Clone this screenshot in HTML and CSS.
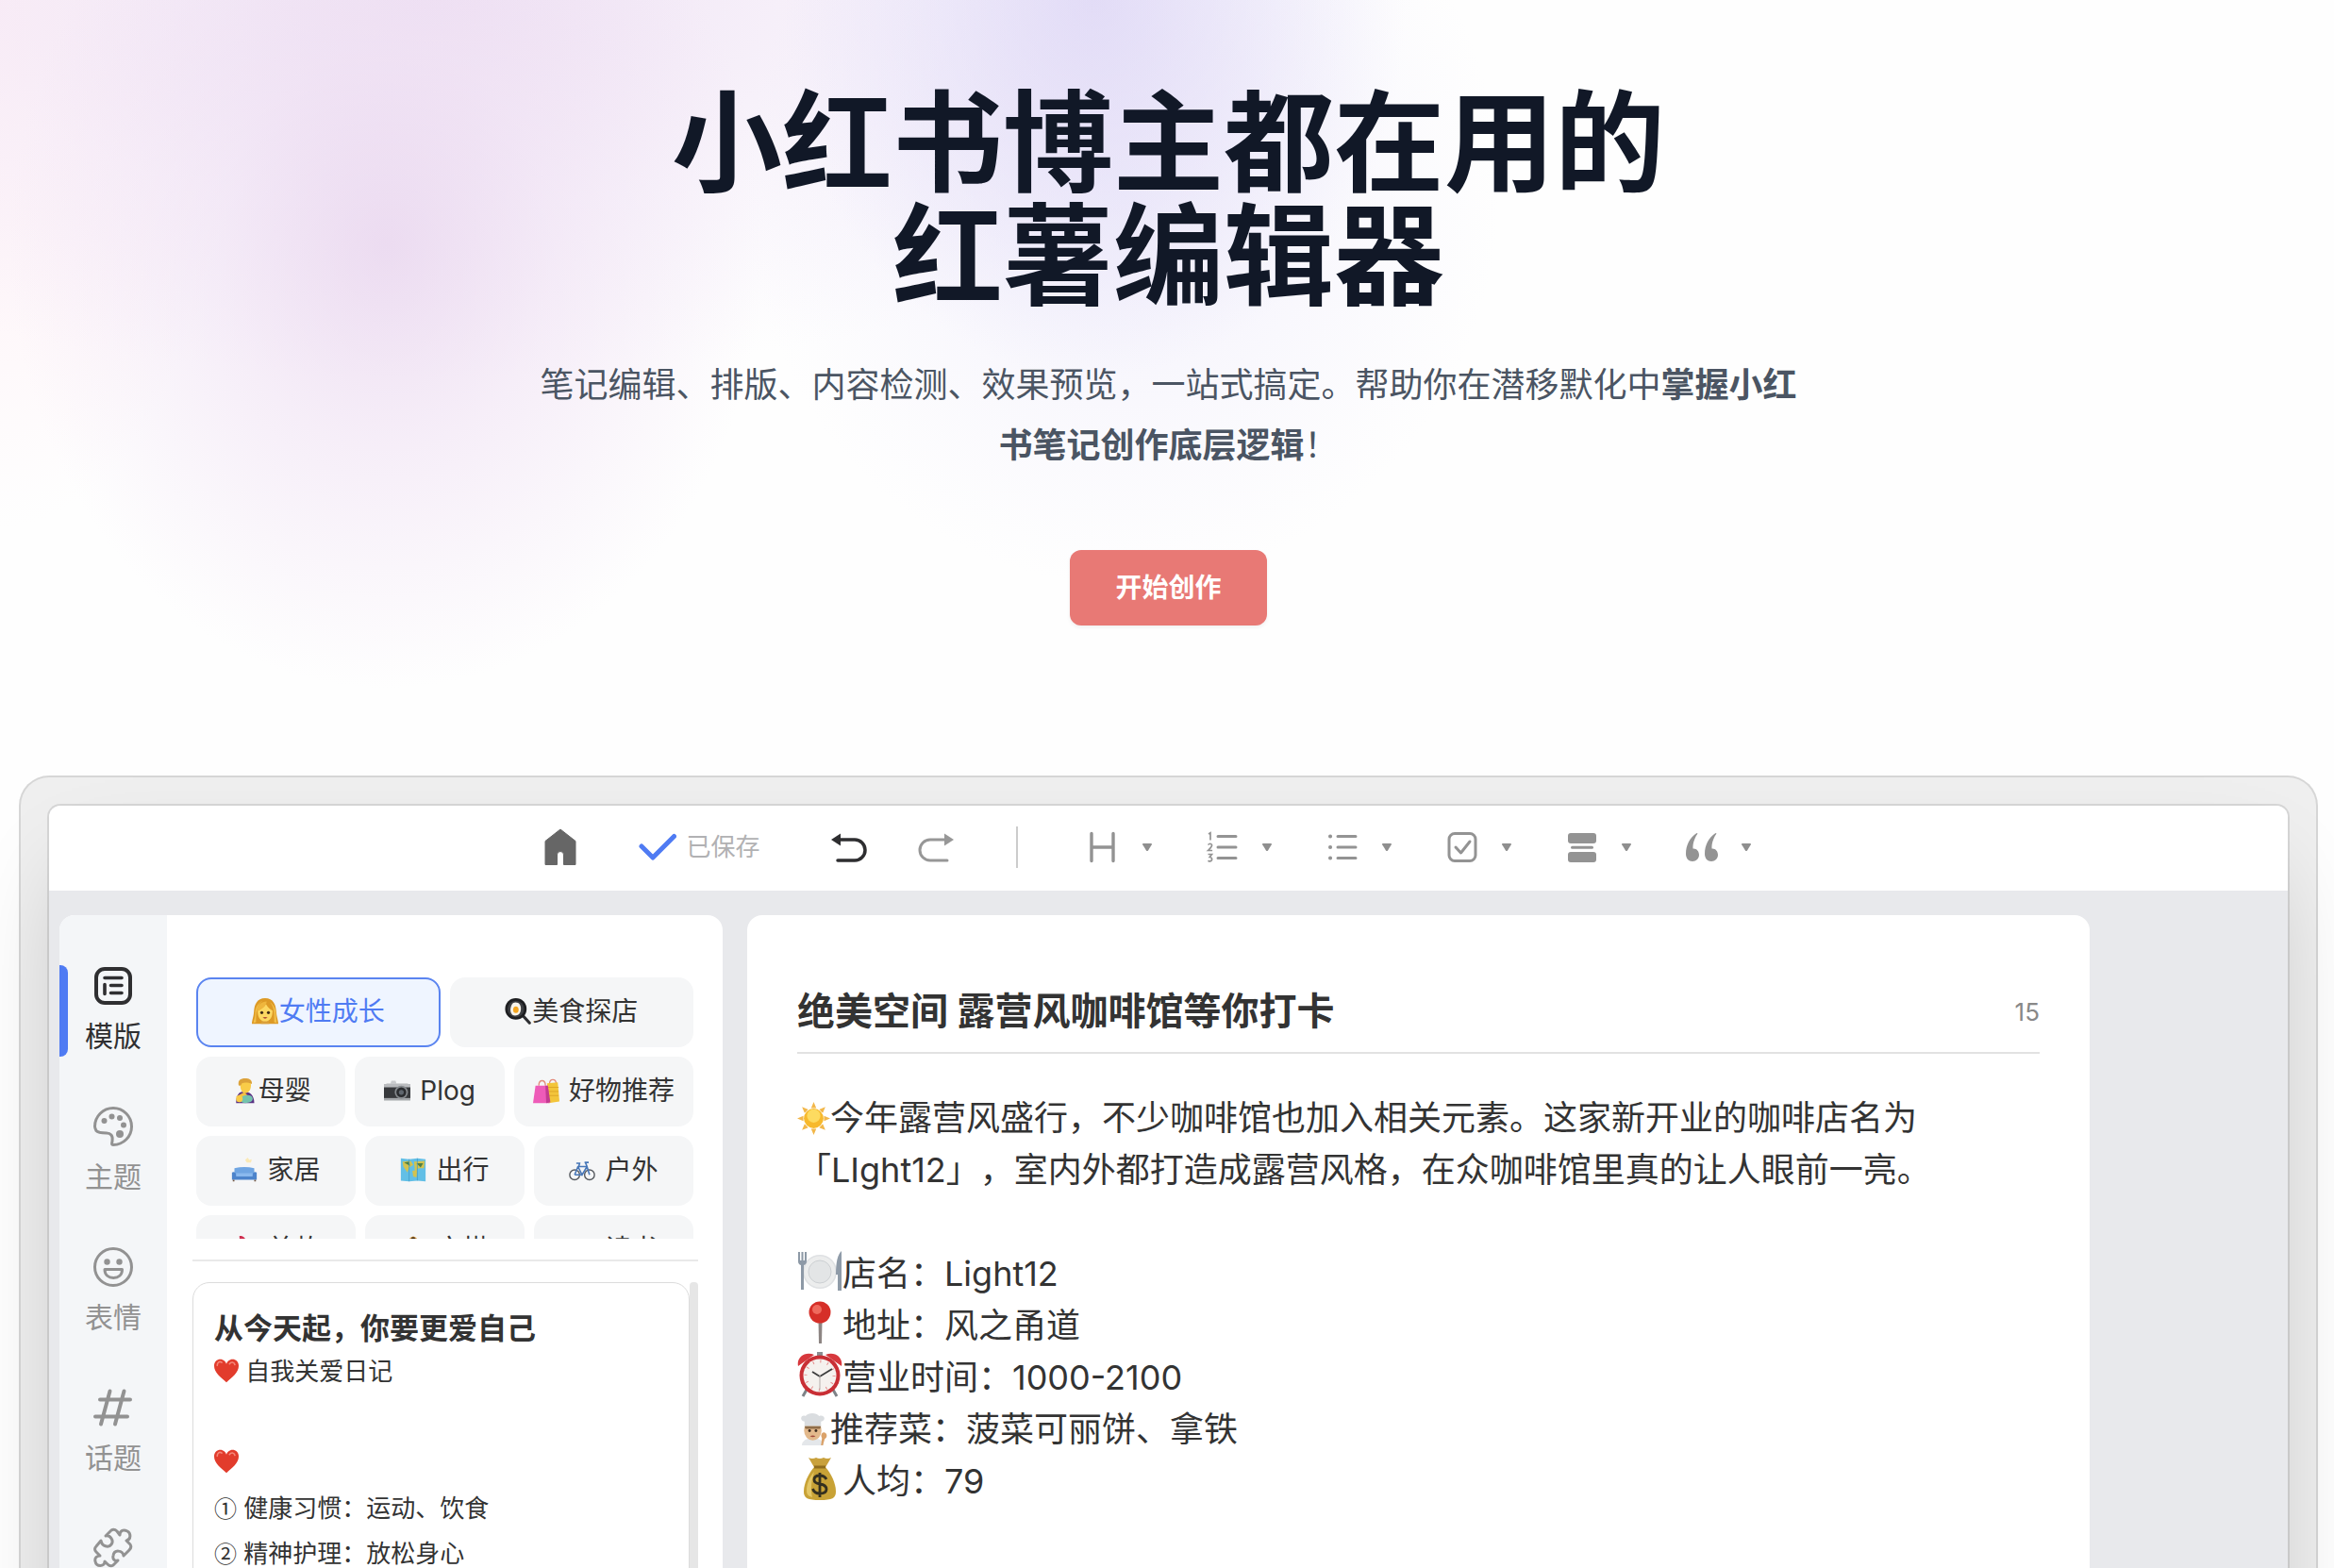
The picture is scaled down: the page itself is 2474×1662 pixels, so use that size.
FILE: index.html
```
<!DOCTYPE html>
<html lang="zh-Hans">
<head>
  <meta charset="UTF-8">
  <meta name="viewport" content="width=device-width, initial-scale=1.0">
  <title>红薯编辑器</title>
  <link rel="stylesheet" href="styles.css">
</head>
<body>
  <!-- 图标 -->
  <svg class="sprite" aria-hidden="true">
    <symbol id="e-woman" viewBox="0 0 32 32">
      <path d="M16 0C6 0 3 8 2.500 16 2 23 0 27 0 31h32c0-4-2-8-2.500-15C29 8 26 0 16 0z" fill="#dd9a26"/>
      <path d="M5 29C5 20 5 8 13 3 7 6 4 12 4 18s-2 9-2 12zM27 29c0-9 1-17-5-24 5 3 7 9 7 14s1 8 1 11z" fill="#f2c14c"/>
      <path d="M12 25h8l1 6H11z" fill="#dba03a"/>
      <path d="M7 15c3-1 8-4 10-8 2 4 5 6 8 8 0 8-3 13-9 13S7 23 7 15z" fill="#fdd862"/>
      <path d="M6 16C6 8 12 4 18 4c-1 6-7 10-12 12z" fill="#efb63d"/>
      <circle cx="12" cy="17.500" r="1.800" fill="#3f2a16"/><circle cx="20" cy="17.500" r="1.800" fill="#3f2a16"/>
      <path d="M13 23.500q3-1.500 6 0-3 2.500-6 0z" fill="#a8402f"/>
    </symbol>
    <symbol id="e-pan" viewBox="0 0 32 32">
      <path d="M20 19l10 11" stroke="#2f2f33" stroke-width="3.500" stroke-linecap="round"/>
      <ellipse cx="13.500" cy="13" rx="13" ry="13" fill="#1d1e21"/>
      <ellipse cx="13.500" cy="13" rx="10" ry="10" fill="#3c3e42"/>
      <path d="M13 5c5 0 7 4 6.500 9s-3 7-7 7-6-4-5.500-8S9 5 13 5z" fill="#f7f4ec"/>
      <ellipse cx="13.500" cy="14" rx="3.300" ry="4" fill="#f4a51f"/>
    </symbol>
    <symbol id="e-baby" viewBox="0 0 32 32">
      <path d="M6 31c0-10 4-14 10-14s12 4 12 14z" fill="#5b3285"/>
      <path d="M11 8c0 7 2 11 6 11s7-4 7-9-2-8-7-8-6 2-6 6z" fill="#f9cc48"/>
      <path d="M9 9C8 3 12 1 17 1s9 2 8 7c-4-2-9-2-12-1-1 3-3 4-4 2z" fill="#dca23a"/>
      <path d="M6 23l10-5 4 4-10 6z" fill="#f4c044"/>
      <path d="M12 24c6-4 13-3 14 1s-4 6-9 6-7-3-5-7z" fill="#74c3ad"/>
      <circle cx="10" cy="26" r="4" fill="#f9cc48"/>
    </symbol>
    <symbol id="e-camera" viewBox="0 0 32 32">
      <path d="M3 7h5l1-3h5l1 3h14v4H2z" fill="#c9cbcd"/>
      <rect x="0" y="9" width="32" height="18" rx="2" fill="#37393c"/>
      <rect x="0" y="8" width="32" height="4" fill="#b9bbbe"/>
      <rect x="0" y="25" width="32" height="3" fill="#a4a7aa"/>
      <circle cx="21" cy="18" r="8" fill="#85898d"/><circle cx="21" cy="18" r="6" fill="#2a2c2f"/>
      <circle cx="21" cy="18" r="3" fill="#5f666e"/>
    </symbol>
    <symbol id="e-bags" viewBox="0 0 32 32">
      <path d="M20 8c0-7 8-7 8 0M7 10c0-8 8-8 8 0" fill="none" stroke="#e28a7a" stroke-width="1.500"/>
      <path d="M17 7l13-1 2 23-13 2z" fill="#f3c53a"/>
      <path d="M18 12h13M18 17h13M18 22h13" stroke="#dba225"/>
      <path d="M3 10h15l2 21H0z" fill="#ee5bb8"/>
      <path d="M15 10h3l3 20-5 1z" fill="#c23b90"/>
    </symbol>
    <symbol id="e-sofa" viewBox="0 0 32 32">
      <path d="M20 1l2 3 3-1-1 4-5 0-2-3z" fill="#fbe9b5"/>
      <path d="M4 14q12-3 24 0v10H4z" fill="#6fa5e2"/>
      <path d="M1 19q4-2 5 3h20q1-5 5-3v9H1z" fill="#4d84cb"/>
      <path d="M6 20h20v4H6z" fill="#8ab9ee"/>
      <path d="M3 28v2M29 28v2" stroke="#755843" stroke-width="2"/>
    </symbol>
    <symbol id="e-map" viewBox="0 0 32 32">
      <path d="M1 2l10 1 10-1 10 1v27l-10-1-10 1-10-1z" fill="#62bfe6"/>
      <path d="M3 6l10-1 3 5-5 3-2 6-5-7zM17 6l13-1-1 9-6 0-5 3zM15 17l6-1-1 9-4-1z" fill="#d2c350"/>
      <path d="M5 7l6-1 1 5zM20 8h8l-3 5z" fill="#4d7f45"/>
      <path d="M11 3v27M21 2v27" stroke="#3d97c4" stroke-width=".8"/>
    </symbol>
    <symbol id="e-bike" viewBox="0 0 32 32">
      <circle cx="7" cy="22" r="6" fill="none" stroke="#55595e" stroke-width="1.600"/>
      <circle cx="25" cy="22" r="6" fill="none" stroke="#55595e" stroke-width="1.600"/>
      <path d="M7 22l4-10h11l3 10M11 12l5 10 6-10M7 22h9M9 8h4l-1 4M20 7l2 5M19 7h5" fill="none" stroke="#4777b8" stroke-width="1.800"/>
    </symbol>
    <symbol id="e-lipstick" viewBox="0 0 32 32">
      <path d="M10 0c4-1 8 3 9 8v7h-8z" fill="#cf2f50"/><path d="M9 15h12v6H9z" fill="#e3bf53"/><path d="M8 21h14v10H8z" fill="#333"/>
    </symbol>
    <symbol id="e-bell" viewBox="0 0 32 32">
      <path d="M9 7q7-13 14 0l3 8H6z" fill="#c98d35"/><circle cx="16" cy="4" r="2.500" fill="#463019"/><path d="M6 15h20v16H6z" fill="#a4682d"/>
    </symbol>
    <symbol id="e-book" viewBox="0 0 32 32">
      <path d="M1 6q8-3 15 0 7-3 15 0v20H1z" fill="#d9dde2"/><path d="M16 6v20" stroke="#8b9098"/>
    </symbol>
    <symbol id="e-heart" viewBox="0 0 32 32">
      <path d="M16 31C8 24 0 18 0 9.500 0 4 4 1 8 1c4 0 7 3 8 6 1-3 4-6 8-6s8 3 8 8.500C32 18 24 24 16 31z" fill="#e23c2c"/>
      <path d="M4 9c0-4 3-6 6-4M20 7c2-3 6-3 7 1" fill="none" stroke="#f5887a" stroke-width="2" stroke-linecap="round"/>
    </symbol>
    <symbol id="e-sun" viewBox="0 0 32 32">
      <path d="M16 0l2.500 6h-5zM16 32l2.500-6h-5zM0 16l6-2.500v5zM32 16l-6-2.500v5zM4.700 4.700l6 2.500-3.500 3.500zM27.300 4.700l-6 2.500 3.500 3.500zM4.700 27.300l6-2.500-3.500-3.500zM27.300 27.300l-6-2.500 3.500-3.500z" fill="#f2b74a"/>
      <circle cx="16" cy="16" r="9.500" fill="#f7b92c"/><circle cx="16" cy="13.500" r="6.500" fill="#fddb60"/>
    </symbol>
    <symbol id="e-plate" viewBox="0 0 48 48">
      <circle cx="24" cy="25" r="18" fill="#dfe1e3"/><circle cx="24" cy="25" r="16.500" fill="#eceded"/>
      <circle cx="24" cy="25" r="12" fill="#e3e5e6" stroke="#cdd0d3"/>
      <path d="M1 4v10q0 3 3 4v26h3V18q3-1 3-4V4H8v9H6.500V4h-2v9H3V4z" fill="#8d99a6"/>
      <path d="M47 3q-6 5-6 25h2v17h4z" fill="#8f9ba8"/>
    </symbol>
    <symbol id="e-pin" viewBox="0 0 48 48">
      <path d="M22.500 22h4l-.5 24h-3z" fill="#8d8583"/>
      <circle cx="24" cy="13" r="11.500" fill="#d62f28"/><circle cx="21" cy="10" r="5" fill="#ef6a5d"/>
    </symbol>
    <symbol id="e-clock" viewBox="0 0 48 48">
      <path d="M10 40l-4 7M38 40l4 7" stroke="#7e8388" stroke-width="3"/>
      <rect x="21" y="0" width="6" height="5" fill="#8a8e92"/>
      <path d="M1 15C-1 6 8-1 18 3zM47 15C49 6 40-1 30 3z" fill="#d7383d"/>
      <circle cx="24" cy="25" r="21.500" fill="#c92f35"/><circle cx="24" cy="25" r="17.500" fill="#f5f1ee"/>
      <circle cx="24" cy="25" r="15" fill="none" stroke="#e58c8c" stroke-width="3" stroke-dasharray="1 6.850"/>
      <path d="M16 21l8 5 13-8" fill="none" stroke="#3c3c3c" stroke-width="1.800"/>
      <path d="M24 25v15" stroke="#b5adab"/>
    </symbol>
    <symbol id="e-chef" viewBox="0 0 36 36">
      <path d="M5 35q1-8 12-8t12 8z" fill="#e4e7ea"/>
      <ellipse cx="17" cy="19" rx="9.500" ry="10.500" fill="#e3b98c"/>
      <path d="M8 14h18l-1 3H9z" fill="#8f6d49"/>
      <path d="M8 14V9C2 8 4 1 9 3c3-4 12-4 15 0 6-2 8 5 2 6v5z" fill="#dadde0"/>
      <circle cx="13.500" cy="19" r="1.500" fill="#3c2b1f"/><circle cx="20.500" cy="19" r="1.500" fill="#3c2b1f"/>
      <path d="M14 25q3-1.500 6 0-3 2-6 0z" fill="#a34a3c"/>
      <path d="M30 21c3 1 3 6 0 7l-2 7h-2l1-8c-2-3 0-7 3-6z" fill="#dba26a"/>
    </symbol>
    <symbol id="e-money" viewBox="0 0 48 48">
      <path d="M12 2q4 2 8 0 4 2 8 0 4 2 8 0l-7 12H19z" fill="#c9a13c"/>
      <path d="M18 12h12c6 7 11 17 11 26 0 7-4 9-17 9S7 45 7 38c0-9 5-19 11-26z" fill="#c8a236"/>
      <path d="M18 17c-5 6-8 13-8 20 0 4 2 6 6 7-2-9-1-18 2-27z" fill="#e4c766"/>
      <path d="M18 12h12" stroke="#8f6c1e" stroke-width="3"/>
      <path d="M31 25q-2-4-7-4-6 0-6 4.500 0 3.500 6 4.500 7 1 7 5.500 0 4.500-7 4.500-6 0-7.500-5M24 18v26" fill="none" stroke="#34301f" stroke-width="2.800"/>
    </symbol>
    <symbol id="i-caret" viewBox="0 0 12 12"><path d="M2 2h8q1.500 0 .8 1.200L7 9.500q-1 1.200-2 0L1.200 3.200q-.7-1.200.8-1.200z" fill="currentColor"/></symbol>
  </svg>

  <div class="page">
    <!-- 首屏 -->
    <header class="hero">
      <h1>小红书博主都在用的<br>红薯编辑器</h1>
      <p>笔记编辑、排版、内容检测、效果预览，一站式搞定。帮助你在潜移默化中<strong>掌握小红书笔记创作底层逻辑</strong>！</p>
      <a class="cta" href="#editor">开始创作</a>
    </header>

    <!-- 编辑器 -->
    <main class="frame" id="editor">
      <div class="app">
        <div class="toolbar">
          <button class="tool home" type="button" aria-label="首页">
            <svg viewBox="0 0 36 40"><path d="M18 1L34 13.500V38.500H21.500V28a3.500 3.500 0 0 0-7 0V38.500H2V13.500z" fill="#666" stroke="#666" stroke-linejoin="round"/></svg>
          </button>
          <span class="saved">
            <svg viewBox="0 0 40 40"><path d="M3 19l12 12L37.500 8.500" fill="none" stroke="#4f7bf3" stroke-width="5" stroke-linecap="round" stroke-linejoin="round"/></svg>
            已保存
          </span>
          <button class="tool undo" type="button" aria-label="撤销">
            <svg viewBox="0 0 40 40"><path d="M10 12h16a11 11 0 0 1 0 22H8" fill="none" stroke="#2e2e30" stroke-width="3.500" stroke-linecap="round"/><path d="M1 12l10-6.500v13z" fill="#2e2e30"/></svg>
          </button>
          <button class="tool redo" type="button" aria-label="重做">
            <svg viewBox="0 0 40 40"><path d="M30 12H14a11 11 0 0 0 0 22h18" fill="none" stroke="#979797" stroke-width="3" stroke-linecap="round"/><path d="M39 12L29 5.500v13z" fill="#979797"/></svg>
          </button>
          <span class="divider"></span>
          <div class="formats">
            <button class="tool" type="button" aria-label="标题">
              <svg viewBox="0 0 36 36"><path d="M6 3.500v29M29 3.500v29M6 18h23" fill="none" stroke="#939393" stroke-width="3.400" stroke-linecap="round"/></svg>
              <svg class="caret"><use href="#i-caret"/></svg>
            </button>
            <button class="tool" type="button" aria-label="有序列表">
              <svg viewBox="0 0 36 36"><path d="M13 6.500h19M13 18h19M13 29.500h19" stroke="#939393" stroke-width="3" stroke-linecap="round"/><path d="M3 4l2-1.200v7.600M2.500 15.500q2.500-2.500 4 0 .6 1.500-4 6h4.600M2.500 25.500h4l-2.300 3q3 .3 2.300 3-1.400 2.500-4 .7" fill="none" stroke="#939393" stroke-width="1.700"/></svg>
              <svg class="caret"><use href="#i-caret"/></svg>
            </button>
            <button class="tool" type="button" aria-label="无序列表">
              <svg viewBox="0 0 36 36"><path d="M13 6.500h19M13 18h19M13 29.500h19" stroke="#939393" stroke-width="3" stroke-linecap="round"/><path d="M5 6.500h.1M5 18h.1M5 29.500h.1" stroke="#939393" stroke-width="4" stroke-linecap="round"/></svg>
              <svg class="caret"><use href="#i-caret"/></svg>
            </button>
            <button class="tool" type="button" aria-label="待办">
              <svg viewBox="0 0 36 36"><rect x="4" y="3.500" width="28" height="29" rx="6" fill="none" stroke="#939393" stroke-width="3"/><path d="M11 18l5.500 6L26 12" fill="none" stroke="#939393" stroke-width="3" stroke-linecap="round" stroke-linejoin="round"/></svg>
              <svg class="caret"><use href="#i-caret"/></svg>
            </button>
            <button class="tool" type="button" aria-label="分割">
              <svg viewBox="0 0 36 36" fill="#939393"><rect x="3" y="3" width="30" height="11" rx="3"/><rect x="6" y="16.800" width="24" height="3" rx="1.500"/><rect x="3" y="23" width="30" height="11" rx="3"/></svg>
              <svg class="caret"><use href="#i-caret"/></svg>
            </button>
            <button class="tool" type="button" aria-label="引用">
              <svg viewBox="0 0 36 36" fill="#939393"><path d="M12.500 3C5 8 1 16 1 25c0 5 3 8 7 8s7-3 7-7-3-7-6.500-6.500C8 13 11 7 13.500 3.500z"/><path d="M32.500 3C25 8 21 16 21 25c0 5 3 8 7 8s7-3 7-7-3-7-6.500-6.500C28 13 31 7 33.500 3.500z"/></svg>
              <svg class="caret"><use href="#i-caret"/></svg>
            </button>
          </div>
        </div>

        <div class="workspace">
          <section class="library">
            <nav class="sidebar">
              <a class="side-item active" href="#template">
                <svg viewBox="0 0 44 44" fill="none" stroke="currentColor" stroke-linecap="round"><rect x="4" y="4" width="36" height="36" rx="9" stroke-width="4"/><path d="M13 13.500h18M19.500 21.500H31M19.500 29.500H31M13 20.500v10" stroke-width="3.600"/></svg>
                模版
              </a>
              <a class="side-item" href="#theme">
                <svg viewBox="0 0 44 44"><path d="M22 2.500A19.500 19.500 0 1 1 22 41.500c-2 0-1.500-1-1-4 1-6-2-8.500-6-8.500-5 0-9 0-11-2.500-1-2-1.500-3-1.500-4.500A19.500 19.500 0 0 1 22 2.500z" fill="none" stroke="currentColor" stroke-width="3"/><g fill="currentColor"><circle cx="12.500" cy="16" r="3"/><circle cx="20.500" cy="11.500" r="3"/><circle cx="29" cy="13" r="3"/><circle cx="33" cy="20.500" r="3"/><circle cx="29" cy="30" r="4"/></g></svg>
                主题
              </a>
              <a class="side-item" href="#emoji">
                <svg viewBox="0 0 44 44"><circle cx="22" cy="22" r="19.500" fill="none" stroke="currentColor" stroke-width="3"/><circle cx="15.500" cy="16.500" r="3.200" fill="currentColor"/><circle cx="28.500" cy="16.500" r="3.200" fill="currentColor"/><path d="M13 24.500h18.500c0 6-4 9-9.200 9S13 30.500 13 24.500z" fill="none" stroke="currentColor" stroke-width="3" stroke-linejoin="round"/></svg>
                表情
              </a>
              <a class="side-item" href="#topic">
                <svg viewBox="0 0 44 44" fill="none" stroke="currentColor" stroke-width="4" stroke-linecap="round"><path d="M18.500 4.500L9 39.500M33.500 4.500L24 39.500M8 13.500h32M3 31.500h34"/></svg>
                话题
              </a>
              <a class="side-item" href="#plugin" aria-label="插件">
                <svg viewBox="0 0 44 44" fill="none" stroke="currentColor" stroke-width="3" stroke-linejoin="round"><path d="M14 9l6-6q3-2 6 1l3 4c0-5 4-6 8-4s4 9-1 10l4 4q2 3-1 6l-6 6c-1-6-10-7-11 0-1 4 2 6 5 5l-5 5q-3 2-6-1l-3-3c0 6-9 6-10 0-1-4 2-6 5-6l-4-4q-3-3 0-6l5-6c1 6 8 8 11 4s-1-10-6-9z"/></svg>
              </a>
            </nav>

            <div class="templates">
              <div class="chips">
                <div class="chip-row">
                  <button class="chip selected" type="button"><svg><use href="#e-woman"/></svg>女性成长</button>
                  <button class="chip" type="button"><svg><use href="#e-pan"/></svg>美食探店</button>
                </div>
                <div class="chip-row mixed">
                  <button class="chip" type="button"><svg><use href="#e-baby"/></svg>母婴</button>
                  <button class="chip spaced" type="button"><svg><use href="#e-camera"/></svg>Plog</button>
                  <button class="chip spaced" type="button"><svg><use href="#e-bags"/></svg>好物推荐</button>
                </div>
                <div class="chip-row">
                  <button class="chip spaced" type="button"><svg><use href="#e-sofa"/></svg>家居</button>
                  <button class="chip spaced" type="button"><svg><use href="#e-map"/></svg>出行</button>
                  <button class="chip spaced" type="button"><svg><use href="#e-bike"/></svg>户外</button>
                </div>
                <div class="chip-row">
                  <button class="chip spaced" type="button"><svg><use href="#e-lipstick"/></svg>美妆</button>
                  <button class="chip spaced" type="button"><svg><use href="#e-bell"/></svg>穿搭</button>
                  <button class="chip spaced" type="button"><svg><use href="#e-book"/></svg>读书</button>
                </div>
              </div>

              <div class="template-list">
                <article class="template-card">
                  <h3>从今天起，你要更爱自己</h3>
                  <p><svg><use href="#e-heart"/></svg> 自我关爱日记</p>
                  <p></p>
                  <p><svg><use href="#e-heart"/></svg></p>
                  <p><span class="num">①</span> 健康习惯：运动、饮食</p>
                  <p><span class="num">②</span> 精神护理：放松身心</p>
                </article>
                <div class="scrollbar"></div>
              </div>
            </div>
          </section>

          <article class="note">
            <div class="note-title">
              <h2>绝美空间 露营风咖啡馆等你打卡</h2>
              <span>15</span>
            </div>
            <div class="note-body">
              <p><svg><use href="#e-sun"/></svg>今年露营风盛行，不少咖啡馆也加入相关元素。这家新开业的咖啡店名为<br>「LIght12」，室内外都打造成露营风格，在众咖啡馆里真的让人眼前一亮。</p>
              <ul>
                <li><svg class="big"><use href="#e-plate"/></svg>店名：Light12</li>
                <li><svg class="big"><use href="#e-pin"/></svg>地址：风之甬道</li>
                <li><svg class="big"><use href="#e-clock"/></svg>营业时间：1000-2100</li>
                <li><svg><use href="#e-chef"/></svg>推荐菜：菠菜可丽饼、拿铁</li>
                <li><svg class="big"><use href="#e-money"/></svg>人均：79</li>
              </ul>
            </div>
          </article>
        </div>
      </div>
    </main>
  </div>
</body>
</html>
```

FILE: styles.css
```
* {
  margin: 0;
  padding: 0;
  box-sizing: border-box;
}

body {
  font-family: Inter, "Noto Sans CJK SC", sans-serif;
  color: #333;
  background-color: #fefefe;
  height: 100vh;
  overflow: hidden;
  text-spacing-trim: space-all;
}

button {
  font: inherit;
  color: inherit;
  border: none;
  background: none;
  cursor: pointer;
}

a {
  color: inherit;
  text-decoration: none;
}

.sprite {
  display: none;
}

.page {
  padding: 92px 17px 0 20px;
  background:
    radial-gradient(ellipse 330px 400px at 1160px 0, rgba(216, 208, 244, 0.65), rgba(222, 216, 246, 0.4) 50%, rgba(240, 238, 252, 0) 100%),
    radial-gradient(ellipse 400px 420px at 1190px 200px, rgba(232, 228, 250, 0.5), rgba(240, 238, 252, 0) 100%),
    radial-gradient(ellipse 400px 470px at 410px 260px, rgba(230, 208, 236, 0.7), rgba(236, 218, 241, 0.45) 45%, rgba(246, 236, 248, 0) 100%),
    radial-gradient(ellipse 980px 400px at 460px 0, rgba(238, 224, 243, 0.9), rgba(244, 236, 249, 0.5) 55%, rgba(250, 248, 254, 0) 100%),
    radial-gradient(ellipse 260px 560px at 0 0, rgba(254, 236, 243, 0.9), rgba(254, 244, 248, 0) 100%);
}

/* 首屏 */
.hero {
  display: flex;
  flex-direction: column;
  align-items: center;
  text-align: center;
  padding-bottom: 159px;
}

.hero h1 {
  font-size: 117px;
  line-height: 120px;
  font-weight: 700;
  color: #111827;
}

.hero p {
  max-width: 1344px;
  margin-top: 44px;
  font-size: 36px;
  line-height: 64px;
  color: #4b5563;
}

.cta {
  margin-top: 79px;
  padding: 20px 48px;
  font-size: 28px;
  line-height: 40px;
  font-weight: 700;
  color: #fff;
  background-color: #e87975;
  border-radius: 12px;
  box-shadow: 0 2px 4px rgba(0, 0, 0, 0.06);
}

/* 外框 */
.frame {
  padding: 32px;
  background-color: rgba(0, 0, 0, 0.06);
  border-radius: 32px;
  box-shadow: inset 0 0 0 2px rgba(0, 0, 0, 0.1);
}

.app {
  background-color: #e8e9ec;
  border-radius: 12px;
  box-shadow: 0 0 0 2px rgba(0, 0, 0, 0.1), 0 50px 100px -24px rgba(0, 0, 0, 0.2);
}

/* 工具栏 */
.toolbar {
  display: flex;
  align-items: center;
  justify-content: center;
  height: 90px;
  padding: 0 44px 2px 0;
  background-color: #fff;
  border-radius: 12px 12px 0 0;
}

.tool {
  display: flex;
  align-items: center;
  gap: 23px;
  color: #8f8f8f;
}

.tool svg {
  width: 36px;
  height: 36px;
}

.tool .caret {
  width: 12px;
  height: 12px;
}

.home svg {
  height: 40px;
}

.saved {
  display: flex;
  align-items: center;
  gap: 10px;
  margin: 0 74px 0 65px;
  font-size: 26px;
  line-height: 36px;
  color: #b1b1b3;
}

.saved svg,
.undo svg,
.redo svg {
  width: 40px;
  height: 40px;
}

.redo {
  margin-left: 52px;
}

.divider {
  width: 2px;
  height: 44px;
  margin: 0 72px 0 65px;
  background-color: #ccc;
}

.formats {
  display: flex;
  gap: 56px;
}

/* 工作区 */
.workspace {
  display: flex;
  gap: 26px;
  height: 900px;
  padding: 26px 210px 0 11px;
}

.library {
  display: flex;
  flex: none;
  width: 703px;
  background-color: #fff;
  border-radius: 16px;
  overflow: hidden;
}

.sidebar {
  display: flex;
  flex-direction: column;
  gap: 52px;
  width: 114px;
  padding-top: 53px;
  background-color: #f4f6f8;
}

.side-item {
  display: flex;
  flex-direction: column;
  align-items: center;
  gap: 10px;
  font-size: 30px;
  line-height: 43px;
  color: #929292;
}

.side-item svg {
  width: 44px;
  height: 44px;
}

.side-item.active {
  color: #2f2f31;
  position: relative;
}

.side-item.active::before {
  content: "";
  position: absolute;
  left: 0;
  top: 0;
  bottom: 0;
  width: 9px;
  background-color: #4f7bf3;
  border-radius: 0 8px 8px 0;
}

.templates {
  flex: 1;
  display: flex;
  flex-direction: column;
  padding: 66px 26px 0 27px;
}

.chips {
  display: flex;
  flex-direction: column;
  gap: 10px;
  height: 277px;
  padding: 0 5px 0 4px;
  overflow: hidden;
}

.chip-row {
  display: grid;
  grid-auto-flow: column;
  grid-auto-columns: 1fr;
  gap: 10px;
}

.chip-row.mixed {
  grid-template-columns: 5fr 5fr 6fr;
}

.chip {
  display: flex;
  align-items: center;
  justify-content: center;
  gap: 1px;
  height: 74px;
  padding-bottom: 3px;
  font-size: 28px;
  line-height: 40px;
  background-color: #f5f6f7;
  border-radius: 16px;
}

.chip.spaced {
  gap: 10px;
}

.chip svg {
  width: 28px;
  height: 28px;
}

.chip.selected {
  color: #4f7bf3;
  background-color: #eff5ff;
  border: 2px solid #5a84f0;
}

.template-list {
  display: flex;
  flex: 1;
  margin-top: 22px;
  padding-top: 22px;
  border-top: 2px solid #e9e9e9;
}

.template-card {
  flex: 1;
  padding: 26px 22px;
  border: 1px solid #dcdcdc;
  border-radius: 18px 18px 0 0;
}

.template-card h3 {
  font-size: 31px;
  line-height: 44px;
}

.template-card p {
  height: 48px;
  font-size: 26px;
  line-height: 48px;
}

.template-card svg {
  width: 26px;
  height: 26px;
  vertical-align: -3px;
}

.num {
  font-family: "Noto Sans CJK SC", sans-serif;
  font-size: 24px;
}

.scrollbar {
  width: 9px;
  background-color: #e6e6e6;
  border-radius: 4px 4px 0 0;
}

/* 笔记 */
.note {
  flex: 1;
  padding: 73px 53px 0;
  background-color: #fff;
  border-radius: 16px;
}

.note-title {
  display: flex;
  justify-content: space-between;
  align-items: center;
  padding-bottom: 14px;
  border-bottom: 2px solid #e2e2e2;
}

.note-title h2 {
  font-size: 40px;
  line-height: 58px;
}

.note-title span {
  font-size: 26px;
  color: #888;
}

.note-body {
  padding-top: 41px;
  font-size: 36px;
  line-height: 55px;
  white-space: nowrap;
}

.note-body svg {
  width: 35px;
  height: 35px;
  vertical-align: -5px;
}

.note-body ul {
  margin-top: 55px;
  list-style: none;
}

.note-body li {
  display: flex;
  align-items: center;
  height: 55px;
}

.note-body .big {
  width: 48px;
  height: 48px;
  margin-bottom: 8px;
}
```
